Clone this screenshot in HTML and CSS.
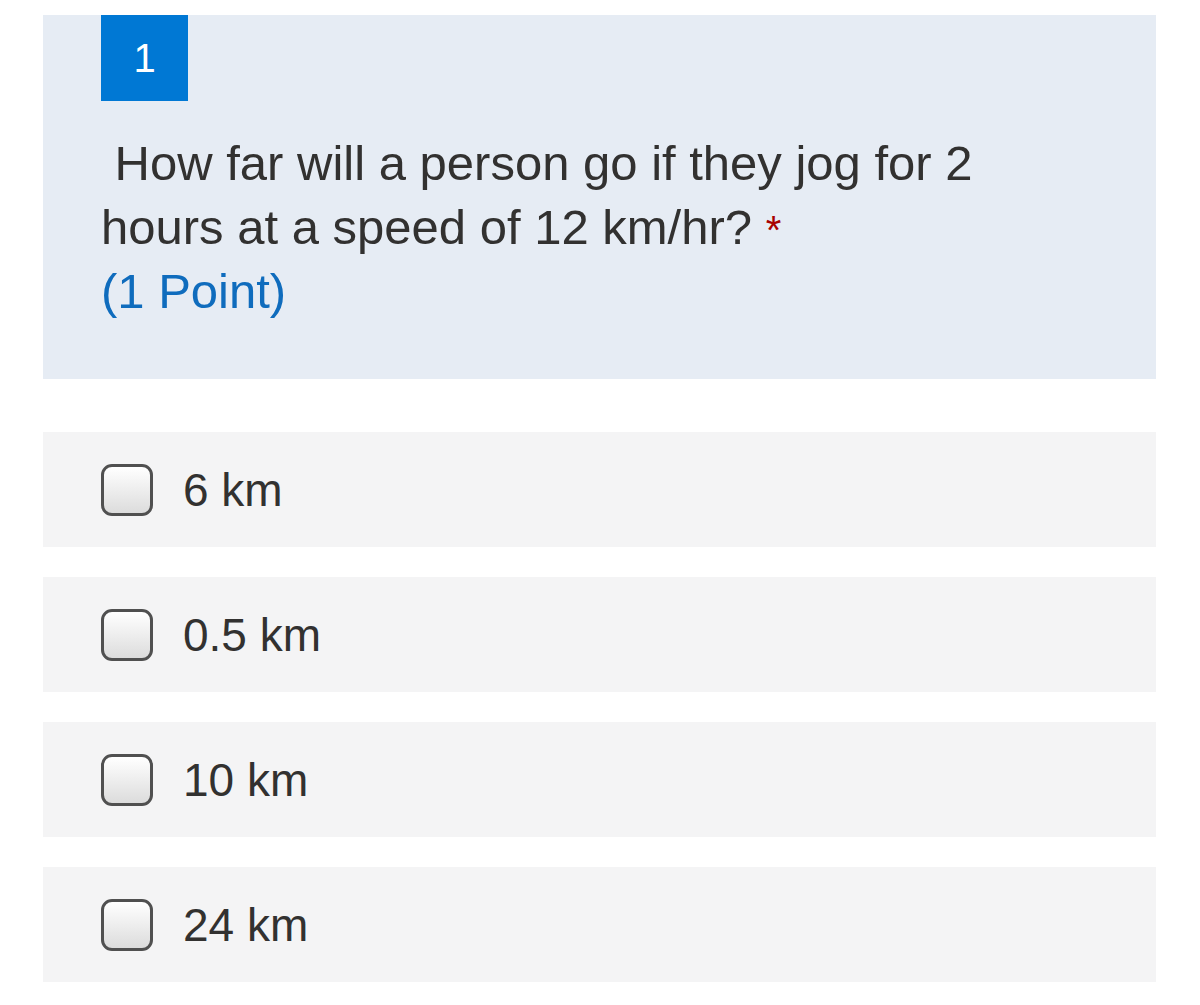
FILE: index.html
```html
<!DOCTYPE html>
<html>
<head>
<meta charset="utf-8">
<link rel="stylesheet" href="styles.css">
</head>
<body>
<div class="page">
  <div class="question">
    <div class="badge">1</div>
    <div class="qtext">&nbsp;How far will a person go if they jog for 2 hours at a speed of 12 km/hr? <span class="req">*</span></div>
    <div class="points">(1 Point)</div>
  </div>
  <div class="options">
    <label class="option"><span class="box"></span><span class="otext">6 km</span></label>
    <label class="option"><span class="box"></span><span class="otext">0.5 km</span></label>
    <label class="option"><span class="box"></span><span class="otext">10 km</span></label>
    <label class="option"><span class="box"></span><span class="otext">24 km</span></label>
  </div>
</div>
</body>
</html>
```

FILE: styles.css
```css
html, body {
  margin: 0;
  padding: 0;
  background: #ffffff;
}
body {
  font-family: "Liberation Sans", Arial, sans-serif;
  color: #323130;
}
.page {
  padding: 15px 44px 0 43px;
}
.question {
  background: #e6ecf4;
  height: 364px;
  box-sizing: border-box;
  padding: 0 58px;
}
.badge {
  width: 87px;
  height: 86px;
  background: #0078d4;
  color: #ffffff;
  font-size: 40px;
  display: flex;
  align-items: center;
  justify-content: center;
}
.qtext {
  margin-top: 30px;
  font-size: 49px;
  line-height: 64px;
  width: 940px;
}
.req {
  color: #a80000;
  font-size: 40px;
  line-height: 1;
}
.points {
  font-size: 49px;
  line-height: 64px;
  color: #0f6cbd;
}
.options {
  margin-top: 53px;
  display: flex;
  flex-direction: column;
  gap: 30px;
}
.option {
  background: #f4f4f5;
  height: 115px;
  display: flex;
  align-items: center;
  padding-left: 58px;
}
.box {
  width: 46px;
  height: 46px;
  border: 3px solid #505050;
  border-radius: 11px;
  background: linear-gradient(#ffffff, #dcdcdc);
  flex: none;
}
.otext {
  margin-left: 30px;
  font-size: 46px;
}
```
